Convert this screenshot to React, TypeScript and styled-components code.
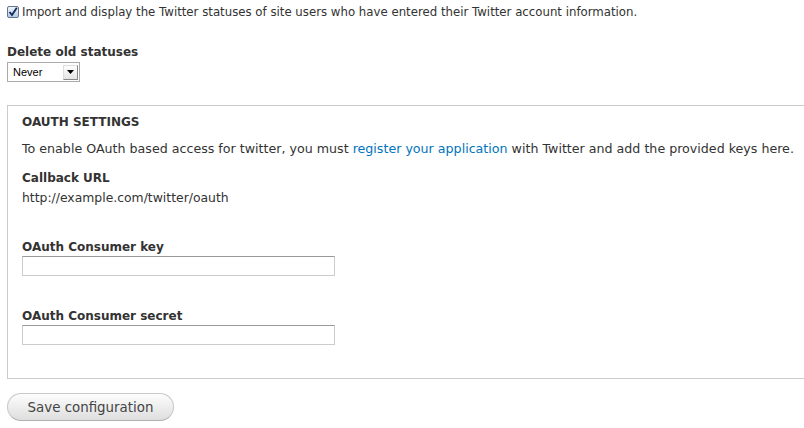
import React from "react";
import styled, { createGlobalStyle } from "styled-components";

const Global = createGlobalStyle`
  html, body { margin: 0; padding: 0; background: #fff; }
  body {
    font-family: "DejaVu Sans", "Liberation Sans", sans-serif;
    font-size: 12px;
    color: #333;
  }
`;

const Page = styled.div`
  padding: 5px 0 0 7px;
  width: 820px;
`;

const CheckRow = styled.label`
  display: flex;
  align-items: center;
  gap: 3px;
  height: 14px;
  font-size: 11.75px;
`;

const Check = styled.span`
  width: 12px;
  height: 12px;
  border: 1px solid #66758c;
  border-radius: 2px;
  background: linear-gradient(#eef4fc, #b3c9e6);
  display: flex;
  align-items: center;
  justify-content: center;
  box-sizing: border-box;
`;

const Item = styled.div<{ $mt?: number }>`
  margin-top: ${(p) => p.$mt ?? 0}px;
`;

const Label = styled.div`
  font-weight: bold;
  font-size: 12px;
  line-height: 16px;
`;

const Select = styled.div`
  margin-top: 2px;
  width: 73px;
  height: 20px;
  box-sizing: border-box;
  border: 1px solid #aaa;
  display: flex;
  align-items: center;
  justify-content: space-between;
  padding: 0 1px 0 5px;
  font-family: "Liberation Sans", sans-serif;
  font-size: 11px;
  color: #000;
`;

const Arrow = styled.span`
  width: 15px;
  height: 15px;
  box-sizing: border-box;
  border: 1px solid #999;
  border-color: #ddd #888 #888 #ddd;
  background: linear-gradient(#fff, #e4e4e4);
  display: flex;
  align-items: center;
  justify-content: center;
`;

const Fieldset = styled.fieldset`
  margin: 23px 0 0 0;
  padding: 8px 14px 33px 14px;
  border: 1px solid #ccc;
  border-right: none;
  min-width: 0;
`;

const Legend = styled.div`
  font-weight: bold;
  text-transform: uppercase;
  font-size: 12px;
  line-height: 16px;
`;

const Desc = styled.p`
  margin: 11px 0 0 0;
  line-height: 16px;
  font-size: 12.65px;
  white-space: nowrap;
`;

const Link = styled.a`
  color: #0074bd;
  text-decoration: none;
`;

const Plain = styled.div`
  line-height: 16px;
  margin-top: 4px;
  font-size: 12.4px;
`;

const TextInput = styled.div`
  margin-top: 1px;
  width: 313px;
  height: 20px;
  box-sizing: border-box;
  border: 1px solid #ccc;
  border-top-color: #999;
`;

const Button = styled.button`
  display: block;
  margin-top: 14px;
  width: 167px;
  height: 28px;
  border-radius: 14px;
  border: 1px solid #c8c8c8;
  border-bottom-color: #b0b0b0;
  background: linear-gradient(#fdfdfd, #dedede);
  font-family: "DejaVu Sans", sans-serif;
  font-size: 13.4px;
  color: #444;
  padding: 0;
  text-align: center;
`;

export default function App() {
  return (
    <>
      <Global />
      <Page>
        <CheckRow>
          <Check>
            <svg width="10" height="10" viewBox="0 0 10 10">
              <path d="M1.5 5 L4 8 L8.8 0.8" fill="none" stroke="#142c5a" strokeWidth="1.9" />
            </svg>
          </Check>
          Import and display the Twitter statuses of site users who have entered their Twitter account information.
        </CheckRow>
        <Item $mt={25}>
          <Label>Delete old statuses</Label>
          <Select>
            Never
            <Arrow>
              <svg width="7" height="4" viewBox="0 0 7 4">
                <path d="M0 0 H7 L3.5 4 Z" fill="#000" />
              </svg>
            </Arrow>
          </Select>
        </Item>
        <Fieldset>
          <Legend>OAuth settings</Legend>
          <Desc>
            To enable OAuth based access for twitter, you must{" "}
            <Link href="#">register your application</Link> with Twitter and add the provided keys here.
          </Desc>
          <Item $mt={13}>
            <Label>Callback URL</Label>
            <Plain>http://example.com/twitter/oauth</Plain>
          </Item>
          <Item $mt={33}>
            <Label>OAuth Consumer key</Label>
            <TextInput />
          </Item>
          <Item $mt={32}>
            <Label>OAuth Consumer secret</Label>
            <TextInput />
          </Item>
        </Fieldset>
        <Button>Save configuration</Button>
      </Page>
    </>
  );
}
